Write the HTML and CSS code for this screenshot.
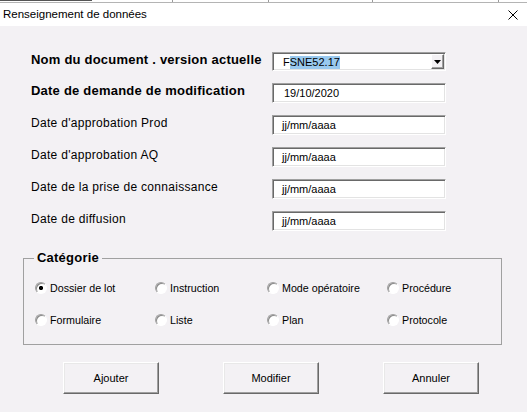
FILE: index.html
```html
<!DOCTYPE html>
<html lang="fr">
<head>
<meta charset="utf-8">
<title>Renseignement de données</title>
<link rel="stylesheet" href="styles.css">
</head>
<body>
<div class="strip">
  <span class="cell c1"><span class="frag"></span></span>
  <span class="cell c2"></span>
  <span class="cell c3"></span>
  <span class="cell c4"></span>
</div>
<div class="titlebar">
  <span class="title">Renseignement de données</span>
  <svg class="close" width="10" height="10" viewBox="0 0 10 10"><path d="M0.5 0.5 L9.5 9.5 M9.5 0.5 L0.5 9.5" stroke="#000" stroke-width="1" fill="none"/></svg>
</div>
<div class="form">
  <div class="fields">
    <label class="lbl bold first">Nom du document . version actuelle</label>
    <div class="box combo">
      <span class="val">F<span class="sel">SNE52.17</span></span>
      <span class="drop"><svg width="7" height="4" viewBox="0 0 7 4"><path d="M0 0 H7 L3.5 4 Z" fill="#000"/></svg></span>
    </div>
    <label class="lbl bold">Date de demande de modification</label>
    <div class="box"><span class="val v2">19/10/2020</span></div>
    <label class="lbl">Date d'approbation Prod</label>
    <div class="box"><span class="val">jj/mm/aaaa</span></div>
    <label class="lbl">Date d'approbation AQ</label>
    <div class="box"><span class="val">jj/mm/aaaa</span></div>
    <label class="lbl">Date de la prise de connaissance</label>
    <div class="box"><span class="val">jj/mm/aaaa</span></div>
    <label class="lbl">Date de diffusion</label>
    <div class="box"><span class="val">jj/mm/aaaa</span></div>
  </div>
  <fieldset class="frame">
    <legend class="legend">Catégorie</legend>
    <div class="radios">
      <div class="opt"><span class="radio on"></span><span>Dossier de lot</span></div>
      <div class="opt"><span class="radio"></span><span>Instruction</span></div>
      <div class="opt"><span class="radio"></span><span>Mode opératoire</span></div>
      <div class="opt"><span class="radio"></span><span>Procédure</span></div>
      <div class="opt"><span class="radio"></span><span>Formulaire</span></div>
      <div class="opt"><span class="radio"></span><span>Liste</span></div>
      <div class="opt"><span class="radio"></span><span>Plan</span></div>
      <div class="opt"><span class="radio"></span><span>Protocole</span></div>
    </div>
  </fieldset>
  <div class="buttons">
    <button class="btn">Ajouter</button>
    <button class="btn">Modifier</button>
    <button class="btn">Annuler</button>
  </div>
</div>
</body>
</html>
```

FILE: styles.css
```css
html, body {
  margin: 0;
  padding: 0;
}
body {
  width: 527px;
  height: 412px;
  overflow: hidden;
  background: #f3f1f4;
  font-family: "Liberation Sans", Arial, sans-serif;
  color: #000;
}
.strip {
  display: flex;
  height: 2px;
  overflow: hidden;
  background: #fff;
  border-bottom: 1px solid #b4b4b4;
}
.cell {
  display: block;
  height: 2px;
  border-right: 1px solid #9a9a9a;
  box-sizing: border-box;
  overflow: hidden;
}
.c1 { width: 173px; }
.c2 { width: 96px; }
.c3 { width: 104px; }
.c4 { width: 126px; }
.frag {
  display: block;
  width: 92px;
  height: 1px;
  background: #555;
}
.titlebar {
  height: 23px;
  background: #fff;
  display: flex;
  align-items: center;
  justify-content: space-between;
  padding: 0 9px 2px 3px;
  box-sizing: border-box;
  font-size: 11.5px;
}
.close {
  display: block;
  margin-top: 2px;
}
.form {
  padding: 25px 0 0 23px;
}
.fields {
  margin-left: 8px;
  display: grid;
  grid-template-columns: 241px 174px;
  grid-auto-rows: 20px;
  row-gap: 12px;
}
.lbl {
  font-size: 12px;
  letter-spacing: 0.3px;
  line-height: 16px;
  white-space: nowrap;
}
.lbl.bold {
  font-size: 13px;
  font-weight: bold;
  letter-spacing: 0.22px;
}
.lbl.first {
  margin-top: 1px;
}
.box {
  box-sizing: border-box;
  height: 20px;
  background: #fff;
  border: 1px solid;
  border-color: #a0a0a0 #fff #fff #a0a0a0;
  box-shadow: inset 1px 1px 0 #696969, inset -1px -1px 0 #e3e3e3;
  display: flex;
  align-items: center;
  font-size: 11px;
  line-height: 18px;
}
.combo {
  height: 19px;
  margin-top: 1px;
}
.val {
  padding-left: 9px;
  white-space: nowrap;
}
.combo .val {
  padding-left: 10px;
}
.v2 {
  padding-left: 11px;
}
.sel {
  background: #99c9ef;
  line-height: 13px;
  display: inline-block;
}
.drop {
  margin-left: auto;
  margin-right: 1px;
  width: 13px;
  height: 15px;
  box-sizing: border-box;
  background: #f3f1f4;
  border: 1px solid;
  border-color: #fff #696969 #696969 #fff;
  box-shadow: inset -1px -1px 0 #a0a0a0;
  display: flex;
  align-items: center;
  justify-content: center;
}
.drop svg {
  display: block;
  margin-left: -1px;
}
.frame {
  margin: 19px 0 0 0;
  width: 479px;
  box-sizing: border-box;
  border: 1px solid #a0a0a0;
  padding: 14px 0 16px 0;
  min-width: 0;
}
.legend {
  margin-left: 10px;
  padding: 0 3px;
  font-size: 13px;
  font-weight: bold;
  letter-spacing: 0.22px;
  line-height: 16px;
}
.radios {
  padding-left: 11px;
  display: grid;
  grid-template-columns: 120px 112px 120px 1fr;
  grid-auto-rows: 16px;
  row-gap: 16px;
  font-size: 10.7px;
  line-height: 16px;
}
.opt {
  display: flex;
  align-items: center;
  gap: 3px;
  white-space: nowrap;
}
.radio {
  display: block;
  width: 12px;
  height: 12px;
  box-sizing: border-box;
  border-radius: 50%;
  border: 1px solid;
  border-color: #a0a0a0 #fff #fff #a0a0a0;
  box-shadow: inset 1px 1px 0 #8a8a8a;
  background: #fff;
}
.radio.on {
  background: radial-gradient(circle at 50% 50%, #000 0, #000 1.8px, #fff 2.4px);
}
.buttons {
  margin: 17px 0 0 40px;
  display: flex;
  gap: 64px;
}
.btn {
  width: 96px;
  height: 32px;
  box-sizing: border-box;
  background: #f3f1f4;
  border: 1px solid;
  border-color: #fff #696969 #696969 #fff;
  box-shadow: inset -1px -1px 0 #a0a0a0, inset 1px 1px 0 #e8e8e8;
  font-family: "Liberation Sans", Arial, sans-serif;
  font-size: 11px;
  color: #000;
  padding: 0;
}
```
